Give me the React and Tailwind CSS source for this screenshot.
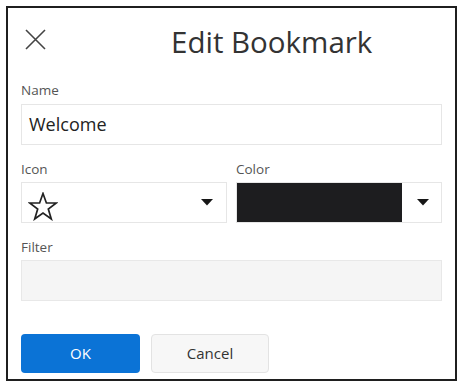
import React from 'react';

const Caret = () => (
    <svg width="12" height="7" viewBox="0 0 12 7" className="shrink-0">
        <path d="M0 0 L12 0 L6 6.5 Z" fill="#161616" />
    </svg>
);

function App() {
    return (
        <div className="h-[388px] w-[465px] bg-white pl-[6px] pt-[6px] font-['Open_Sans',sans-serif]">
            <div className="flex h-[375px] w-[451px] flex-col border-2 border-[#1f1f1f] px-[13px]">
                {/* header */}
                <div className="flex h-[73px] items-start">
                    <svg width="21" height="21" viewBox="0 0 21 21" className="ml-[4px] mt-[21px]">
                        <path d="M1 1 L20 20 M20 1 L1 20" stroke="#444" strokeWidth="1.6" fill="none" />
                    </svg>
                    <h1 className="ml-[125px] mt-[16px] text-[29.5px] leading-[36px] text-[#333]">Edit Bookmark</h1>
                </div>

                <label className="text-[13.5px] leading-[18px] text-[#555]">Name</label>
                <div className="mt-[5px] flex h-[41px] items-center border border-[#e6e6e6] pl-[7px] text-[18px] text-[#222]">
                    Welcome
                </div>

                <div className="mt-[15px] flex gap-[9px]">
                    <div className="flex w-[206px] flex-col">
                        <label className="text-[13.5px] leading-[18px] text-[#555]">Icon</label>
                        <div className="mt-[4px] flex h-[41px] items-center justify-between border border-[#e6e6e6] pl-[6px] pr-[13px]">
                            <svg width="30" height="29" viewBox="0 0 30 29" className="mt-[7px]">
                                <polygon
                                    points="15,1.5 18.4,11 28.3,11 20.3,17 23.3,27 15,21 6.7,27 9.7,17 1.7,11 11.6,11"
                                    fill="none"
                                    stroke="#222"
                                    strokeWidth="1.7"
                                    strokeLinejoin="miter"
                                />
                            </svg>
                            <Caret />
                        </div>
                    </div>
                    <div className="flex w-[206px] flex-col">
                        <label className="text-[13.5px] leading-[18px] text-[#555]">Color</label>
                        <div className="mt-[4px] flex h-[41px] items-center border border-[#e6e6e6]">
                            <div className="h-full w-[165px] bg-[#1d1d1f]" />
                            <div className="flex flex-1 justify-center pl-[2px]">
                                <Caret />
                            </div>
                        </div>
                    </div>
                </div>

                <label className="mt-[15px] text-[13.5px] leading-[18px] text-[#555]">Filter</label>
                <div className="mt-[4px] h-[41px] border border-[#e8e8e8] bg-[#f5f5f5]" />

                <div className="mt-[33px] flex gap-[11px]">
                    <button className="h-[39px] w-[119px] rounded-[4px] bg-[#0b73d6] text-[15px] text-white">OK</button>
                    <button className="h-[39px] w-[118px] rounded-[4px] border border-[#e3e3e3] bg-[#f7f7f7] text-[15px] text-[#333]">Cancel</button>
                </div>
            </div>
        </div>
    );
}

export default App;
